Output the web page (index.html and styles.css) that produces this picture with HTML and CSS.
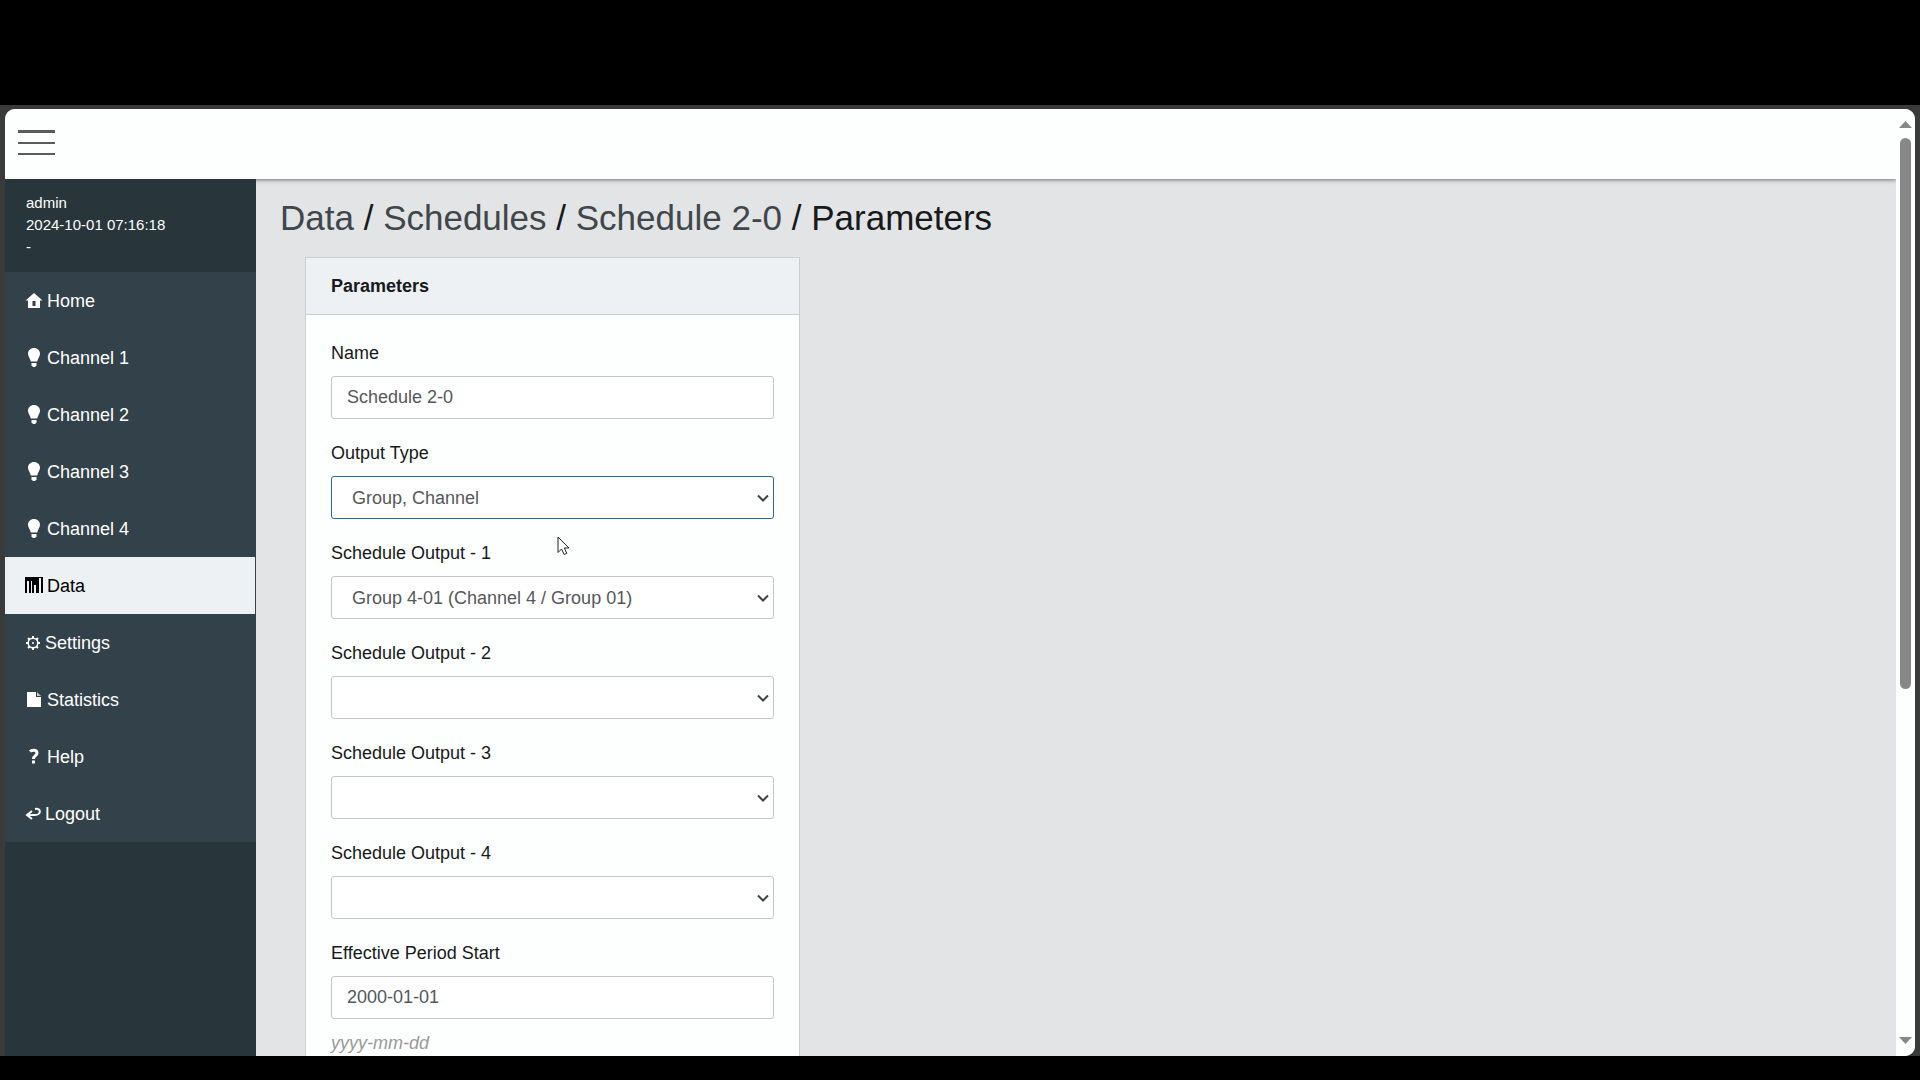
FILE: index.html
```html
<!DOCTYPE html>
<html lang="en">

<head>
  <meta charset="UTF-8">
  <meta name="viewport" content="width=device-width, initial-scale=1.0">
  <title>Parameters</title>
  <link rel="stylesheet" href="styles.css">
</head>

<body>
  <!-- shared icons -->
  <svg class="sprite" aria-hidden="true">
    <symbol id="bulb" viewBox="0 0 16 20">
      <path d="M8 0C4.500 0 2 2.500 2 5.800c0 3 2.300 4.700 2.800 7.700h6.400c.5-3 2.800-4.700 2.800-7.700C14 2.500 11.500 0 8 0z" />
      <path d="M5.500 15h5v2.500L9 19H7l-1.500-1.500z" />
    </symbol>
    <symbol id="chevron" viewBox="0 0 12 8">
      <path d="M1 1.500l5 5 5-5" fill="none" stroke="currentColor" stroke-width="2" />
    </symbol>
  </svg>

  <div class="frame">
    <div class="window">
      <div class="page">
        <header class="topbar">
          <button class="menu-toggle" type="button" aria-label="Menu">
            <span></span>
            <span></span>
            <span></span>
          </button>
        </header>

        <div class="layout">
          <aside class="sidebar">
            <div class="user">
              <div>admin</div>
              <div>2024-10-01 07:16:18</div>
              <div>-</div>
            </div>
            <nav class="nav">
              <a href="#">
                <svg class="icon" viewBox="0 0 16 20"><path fill-rule="evenodd" d="M8 2l8.500 7.500H14V17H2V9.500H-.5zM6.500 10v5h3v-5z" /></svg>
                Home
              </a>
              <a href="#"><svg class="icon"><use href="#bulb" /></svg>Channel 1</a>
              <a href="#"><svg class="icon"><use href="#bulb" /></svg>Channel 2</a>
              <a href="#"><svg class="icon"><use href="#bulb" /></svg>Channel 3</a>
              <a href="#"><svg class="icon"><use href="#bulb" /></svg>Channel 4</a>
              <a href="#" class="active">
                <svg class="icon" viewBox="0 0 16 20"><path d="M-1 1h18v16h-2V2h-2v15h-3V9H8v8H6V5H5v12H3V5H1v12h-2z" /></svg>
                Data
              </a>
              <a href="#">
                <svg class="icon icon-narrow" viewBox="0 0 14 20">
                  <circle cx="7" cy="10" r="4.800" fill="none" stroke="currentColor" stroke-width="1.500" />
                  <circle cx="7" cy="10" r="1" />
                  <path d="M7 3v2M7 15v2M0 10h2M12 10h2M2 5l1.500 1.500M10.500 13.500L12 15M2 15l1.500-1.500M10.500 6.500L12 5" fill="none" stroke="currentColor" stroke-width="2" />
                </svg>
                Settings
              </a>
              <a href="#">
                <svg class="icon" viewBox="0 0 16 20"><path d="M1 2h9v5h5v10H1z" /><path d="M11 2l4 4h-4z" opacity=".7" /></svg>
                Statistics
              </a>
              <a href="#">
                <svg class="icon" viewBox="0 0 16 20">
                  <path d="M4 4.500C6 2.500 11 2.500 11 6c0 2.800-3.500 2.500-3.500 6" fill="none" stroke="currentColor" stroke-width="3" />
                  <path d="M6 13.500h3v3H6z" />
                </svg>
                Help
              </a>
              <a href="#">
                <svg class="icon icon-narrow" viewBox="0 0 14 20">
                  <path d="M9 5c6.500-1.500 6.500 6 0 6H1M6 7l-5 4 5 4" fill="none" stroke="currentColor" stroke-width="2" />
                </svg>
                Logout
              </a>
            </nav>
          </aside>

          <main class="main">
            <h1 class="breadcrumb">
              <a href="#">Data</a> / <a href="#">Schedules</a> / <a href="#">Schedule 2-0</a> / Parameters
            </h1>

            <section class="card">
              <h2 class="card-header">Parameters</h2>
              <form class="card-body">
                <div class="field">
                  <label for="name">Name</label>
                  <input id="name" class="control" type="text" value="Schedule 2-0">
                </div>
                <div class="field">
                  <label for="type">Output Type</label>
                  <div class="select">
                    <select id="type" class="control focused">
                      <option>Group, Channel</option>
                    </select>
                    <svg><use href="#chevron" /></svg>
                  </div>
                </div>
                <div class="field">
                  <label for="output1">Schedule Output - 1</label>
                  <div class="select">
                    <select id="output1" class="control">
                      <option>Group 4-01 (Channel 4 / Group 01)</option>
                    </select>
                    <svg><use href="#chevron" /></svg>
                  </div>
                </div>
                <div class="field">
                  <label for="output2">Schedule Output - 2</label>
                  <div class="select">
                    <select id="output2" class="control">
                      <option></option>
                    </select>
                    <svg><use href="#chevron" /></svg>
                  </div>
                </div>
                <div class="field">
                  <label for="output3">Schedule Output - 3</label>
                  <div class="select">
                    <select id="output3" class="control">
                      <option></option>
                    </select>
                    <svg><use href="#chevron" /></svg>
                  </div>
                </div>
                <div class="field">
                  <label for="output4">Schedule Output - 4</label>
                  <div class="select">
                    <select id="output4" class="control">
                      <option></option>
                    </select>
                    <svg><use href="#chevron" /></svg>
                  </div>
                </div>
                <div class="field">
                  <label for="start">Effective Period Start</label>
                  <input id="start" class="control" type="text" value="2000-01-01">
                  <em class="hint">yyyy-mm-dd</em>
                </div>
              </form>
            </section>
          </main>
        </div>
      </div>

      <div class="scrollbar" aria-hidden="true">
        <svg class="arrow" viewBox="0 0 13 7"><path d="M6.500 0L13 7H0z" /></svg>
        <div class="track">
          <div class="thumb"></div>
        </div>
        <svg class="arrow" viewBox="0 0 13 7"><path d="M0 0h13L6.500 7z" /></svg>
      </div>
    </div>
  </div>

  <svg class="cursor" viewBox="0 0 13 20" aria-hidden="true">
    <path d="M1 1v15.500l3.500-3.500 2.700 5.500 2.600-1.200L7.300 12H12z" />
  </svg>
</body>

</html>
```
FILE: styles.css
```css
* {
  box-sizing: border-box;
}

body {
  display: flex;
  flex-direction: column;
  height: 100vh;
  margin: 0;
  padding: 105px 0 24px;
  overflow: hidden;
  font-family: "Liberation Sans", Arial, sans-serif;
  font-size: 18px;
  line-height: 24px;
  color: #17191b;
  background: #000;
}

.sprite {
  position: absolute;
  width: 0;
  height: 0;
}

/* browser window */
.frame {
  flex: 1;
  display: flex;
  min-height: 0;
  padding: 4px 5px 0;
  background: #3b3a3a;
}

.window {
  flex: 1;
  display: flex;
  min-width: 0;
  background: #fdfefe;
  border-radius: 10px 10px 10px 0;
  overflow: hidden;
}

.page {
  flex: 1;
  display: flex;
  flex-direction: column;
  min-width: 0;
}

.topbar {
  position: relative;
  z-index: 1;
  flex: none;
  height: 70px;
  padding: 21px 13px;
  background: #fdfefe;
  box-shadow: 0 1px 4px rgba(0, 0, 0, 0.5);
}

.menu-toggle {
  display: flex;
  flex-direction: column;
  justify-content: space-between;
  width: 37px;
  height: 25px;
  padding: 0;
  border: 0;
  background: none;
}

.menu-toggle span {
  height: 2px;
  background: #5c5c5c;
}

.menu-toggle span:first-child {
  height: 3px;
}

.layout {
  flex: 1;
  display: flex;
  min-height: 0;
}

/* sidebar */
.sidebar {
  position: relative;
  z-index: 2;
  flex: none;
  width: 251px;
  color: #fff;
  background: #28363b;
}

.user {
  padding: 13px 21px 14px;
  font-size: 15px;
  line-height: 22px;
}

.nav {
  background: #33424a;
}

.nav a {
  display: flex;
  align-items: center;
  gap: 5px;
  height: 57px;
  padding: 0 21px;
  color: #fff;
  text-decoration: none;
}

.nav a.active {
  margin-right: 1px;
  color: #000;
  background: #eef1f4;
}

.icon {
  flex: none;
  width: 16px;
  height: 20px;
  fill: currentColor;
  overflow: visible;
}

.icon-narrow {
  width: 14px;
}

/* content */
.main {
  flex: 1;
  min-width: 0;
  padding: 19px 24px;
  background: #e3e4e5;
  overflow: hidden;
}

.breadcrumb {
  margin: 0 0 19px;
  font-size: 35px;
  font-weight: normal;
  line-height: 40px;
}

.breadcrumb a {
  color: #3f474b;
  text-decoration: none;
}

.card {
  width: 495px;
  margin-left: 25px;
  border: 1px solid #c8ced2;
  background: #fdfefe;
}

.card-header {
  margin: 0;
  padding: 16px 25px;
  font-size: 18px;
  font-weight: bold;
  line-height: 24px;
  background: #eef1f4;
  border-bottom: 1px solid #c8ced2;
}

.card-body {
  padding: 26px 25px;
}

.field {
  display: flex;
  flex-direction: column;
  margin-bottom: 22px;
}

.field label {
  margin-bottom: 11px;
}

.control {
  width: 100%;
  height: 43px;
  padding: 0 15px;
  font: inherit;
  color: #54585b;
  background: #fff;
  border: 1px solid #c3c6c9;
  border-radius: 3px;
  outline: 0;
}

.select {
  display: grid;
  align-items: center;
}

.select select,
.select svg {
  grid-area: 1 / 1;
}

.select select {
  padding: 0 20px;
  appearance: none;
}

.select svg {
  justify-self: end;
  width: 12px;
  height: 8px;
  margin-right: 5px;
  color: #3f4346;
  pointer-events: none;
}

.control.focused {
  border-color: #2a6a94;
}

.hint {
  margin-top: 12px;
  color: #999;
}

/* scrollbar */
.scrollbar {
  position: relative;
  z-index: 2;
  flex: none;
  display: flex;
  flex-direction: column;
  align-items: center;
  gap: 10px;
  width: 19px;
  padding: 12px 0;
  background: #fdfefe;
}

.arrow {
  flex: none;
  width: 13px;
  height: 7px;
  fill: #878787;
}

.track {
  flex: 1;
  width: 11px;
}

.thumb {
  height: 62%;
  background: #878787;
  border-radius: 6px;
}

.cursor {
  position: absolute;
  left: 557px;
  top: 536px;
  width: 13px;
  height: 20px;
  fill: #fff;
  stroke: #222;
  stroke-width: 1;
}
```
